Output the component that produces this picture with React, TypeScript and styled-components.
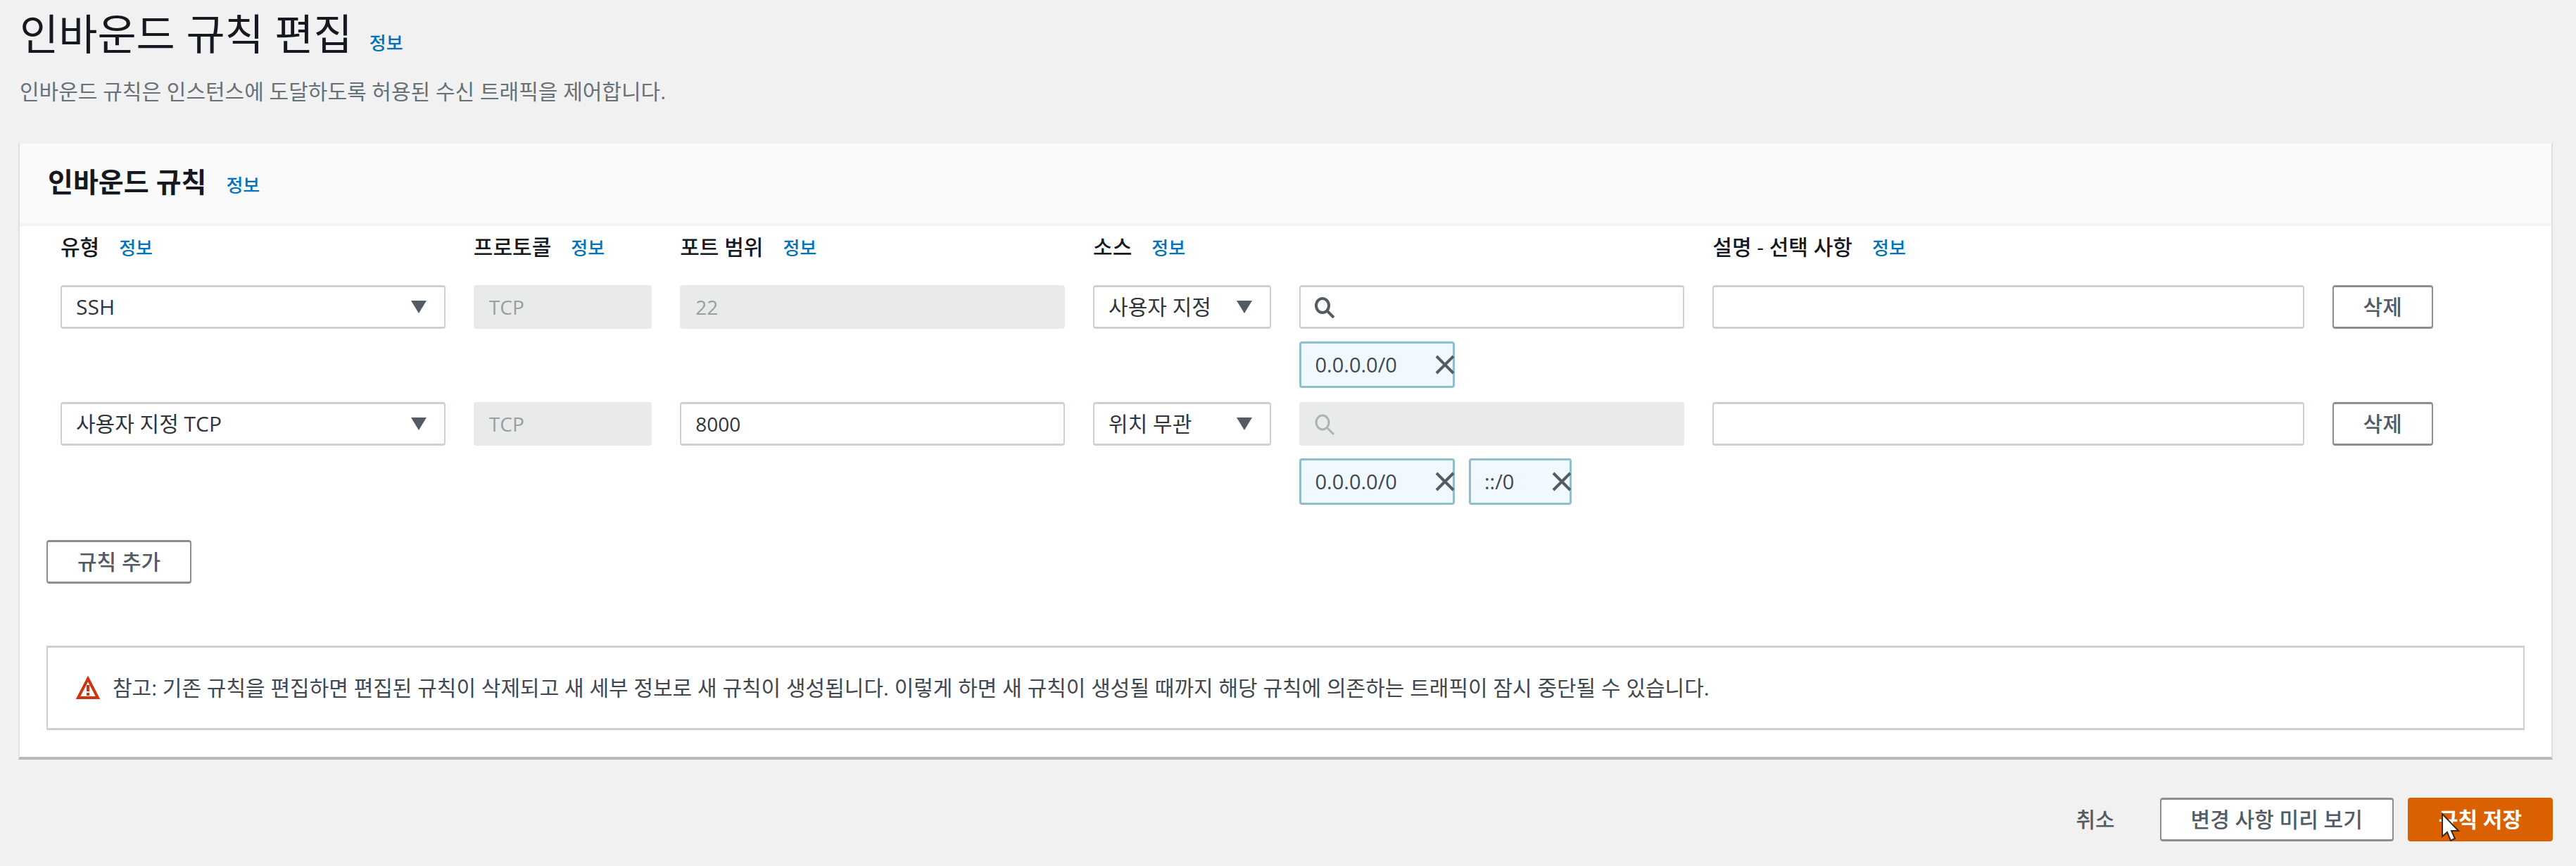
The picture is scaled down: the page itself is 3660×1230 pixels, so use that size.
import React, { useState } from "react";
import styled, { createGlobalStyle, css } from "styled-components";

const GlobalStyle = createGlobalStyle`
  *, *::before, *::after { box-sizing: border-box; }
  body {
    margin: 0;
    background: #f1f1f1;
    color: #16191f;
    font-family: "Open Sans", "Noto Sans CJK KR", sans-serif;
    font-size: 30px;
    line-height: 44px;
  }
  button, input, select { font: inherit; color: inherit; }
  a { color: #0073bb; text-decoration: none; }
`;

const Page = styled.main`
  padding: 12px 33px 36px 26px;
`;

const PageHeader = styled.header`
  display: flex;
  flex-direction: column;
  gap: 24px;
  margin-bottom: 50px;
  padding-left: 2px;
`;

const TitleRow = styled.div<{ $gap: number }>`
  display: flex;
  align-items: baseline;
  gap: ${(p) => p.$gap}px;
`;

const PageTitle = styled.h1`
  margin: 0;
  font-size: 60px;
  line-height: 72px;
  font-weight: 400;
`;

const PageDescription = styled.p`
  margin: 0;
  color: #687078;
`;

const InfoLink = styled.a`
  font-size: 26px;
  font-weight: 500;
`;

const Card = styled.section`
  background: #fff;
  border: 2px solid #dde2e2;
  border-top-color: #eef0f0;
  border-bottom: 4px solid #b5bbbd;
`;

const CardHeader = styled.div`
  padding: 26px 40px 31px;
  background: #fafafa;
  border-bottom: 4px solid #f3f3f3;
`;

const CardTitle = styled.h2`
  margin: 0;
  font-size: 39px;
  line-height: 56px;
  font-weight: 700;
`;

const CardBody = styled.div`
  padding: 8px 38px 38px;
`;

const RuleGrid = styled.div`
  display: grid;
  grid-template-columns: repeat(12, minmax(0, 1fr));
  row-gap: 20px;
`;

const Cell = styled.div<{ $span: number }>`
  grid-column: span ${(p) => p.$span};
  padding: 0 20px;
  min-width: 0;
`;

const HeadCell = styled(Cell)`
  display: flex;
  align-items: baseline;
  gap: 28px;
  padding-bottom: 11px;
  white-space: nowrap;
`;

const ColumnLabel = styled.span`
  font-weight: 500;
`;

const fieldBox = css`
  display: block;
  width: 100%;
  height: 62px;
  padding: 0 20px;
  border: 3px solid #ccd1d1;
  border-left-width: 2px;
  border-right-width: 2px;
  border-radius: 4px;
  background: #fff;
  color: #30353d;
  outline: none;

  &:disabled {
    background: #e9ebea;
    border-color: #e9ebea;
    color: #95a0a2;
    opacity: 1;
  }
`;

const TextField = styled.input<{ $icon?: boolean }>`
  ${fieldBox}
  padding-left: ${(p) => (p.$icon ? 66 : 20)}px;
  font-size: 28px;
`;

const SelectField = styled.select`
  ${fieldBox}
  appearance: none;
  padding-right: 48px;
`;

const FieldFrame = styled.div`
  position: relative;
`;

const ArrowIcon = styled.svg`
  position: absolute;
  right: 27px;
  top: 22px;
  width: 22px;
  height: 18px;
  fill: #545b64;
  pointer-events: none;
`;

const SearchIcon = styled.svg<{ $muted?: boolean }>`
  position: absolute;
  left: 21px;
  top: 16px;
  width: 31px;
  height: 31px;
  fill: none;
  stroke: ${(p) => (p.$muted ? "#aab3b4" : "#545b64")};
  stroke-width: ${(p) => (p.$muted ? 3 : 4)};
  pointer-events: none;
`;

const TagList = styled.div`
  display: flex;
  gap: 20px;
  margin-top: 18px;
`;

const Tag = styled.span`
  display: inline-flex;
  align-items: center;
  gap: 54px;
  height: 66px;
  padding-left: 19px;
  border: 3px solid #8fbfce;
  border-radius: 4px;
  background: #f0f9ff;
  color: #414750;
  font-size: 29px;
`;

const TagDismiss = styled.button`
  display: flex;
  margin: 0 -3px 0 0;
  padding: 0;
  border: 0;
  background: none;
  cursor: pointer;

  svg {
    width: 28px;
    height: 28px;
    stroke: #545b64;
    stroke-width: 4;
  }
`;

const Button = styled.button<{ $kind?: "primary" | "normal" | "link" }>`
  position: relative;
  height: 62px;
  padding: 0 42px;
  border: 3px solid #8b8f94;
  border-left-width: 2px;
  border-right-width: 2px;
  border-radius: 4px;
  background: #fff;
  color: #545b64;
  font-weight: 500;
  white-space: nowrap;
  cursor: pointer;

  ${(p) =>
    p.$kind === "primary" &&
    css`
      background: #db6000;
      border-color: #db6000;
      color: #fff;
      font-weight: 700;
    `}
  ${(p) =>
    p.$kind === "link" &&
    css`
      background: none;
      border-color: transparent;
    `}
`;

const AddRow = styled.div`
  margin: 50px 0 88px;
`;

const Notice = styled.div`
  display: flex;
  align-items: center;
  gap: 18px;
  min-height: 120px;
  padding: 16px 40px;
  border: 3px solid #ccd1d1;
  border-left-width: 2px;
  border-right-width: 2px;
  color: #414750;
`;

const WarningIcon = styled.svg`
  flex: none;
  width: 34px;
  height: 34px;
  fill: none;
  stroke: #d13212;
  stroke-width: 4;
`;

const Footer = styled.footer`
  display: flex;
  justify-content: flex-end;
  gap: 20px;
  margin-top: 54px;
`;

const Pointer = styled.svg`
  position: absolute;
  left: 44px;
  top: 18px;
  width: 30px;
  height: 42px;
  fill: #fff;
  stroke: #3a2a20;
  stroke-width: 2;
  pointer-events: none;
`;

interface Rule {
  type: string;
  port: string;
  portFixed: boolean;
  source: string;
  tags: string[];
}

const initialRules: Rule[] = [
  { type: "SSH", port: "22", portFixed: true, source: "사용자 지정", tags: ["0.0.0.0/0"] },
  { type: "사용자 지정 TCP", port: "8000", portFixed: false, source: "위치 무관", tags: ["0.0.0.0/0", "::/0"] },
];

const columns = [
  { id: "type", label: "유형", span: 2 },
  { id: "protocol", label: "프로토콜", span: 1 },
  { id: "port", label: "포트 범위", span: 2 },
  { id: "source", label: "소스", span: 3 },
  { id: "description", label: "설명 - 선택 사항", span: 4 },
];

function Info() {
  return <InfoLink href="#info">정보</InfoLink>;
}

function Select({ value, options, label, onChange }: {
  value: string;
  options: string[];
  label: string;
  onChange: (value: string) => void;
}) {
  return (
    <FieldFrame>
      <SelectField aria-labelledby={label} value={value} onChange={(e) => onChange(e.target.value)}>
        {options.map((o) => (
          <option key={o}>{o}</option>
        ))}
      </SelectField>
      <ArrowIcon viewBox="0 0 22 18" aria-hidden="true">
        <path d="M0 0H22L11 18Z" />
      </ArrowIcon>
    </FieldFrame>
  );
}

function RuleRow({ rule, onChange, onDelete }: {
  rule: Rule;
  onChange: (patch: Partial<Rule>) => void;
  onDelete: () => void;
}) {
  const anywhere = rule.source === "위치 무관";
  return (
    <>
      <Cell $span={2}>
        <Select
          label="col-type"
          value={rule.type}
          options={["SSH", "사용자 지정 TCP"]}
          onChange={(type) => onChange({ type })}
        />
      </Cell>
      <Cell $span={1}>
        <TextField aria-labelledby="col-protocol" value="TCP" disabled readOnly />
      </Cell>
      <Cell $span={2}>
        <TextField
          aria-labelledby="col-port"
          value={rule.port}
          disabled={rule.portFixed}
          onChange={(e) => onChange({ port: e.target.value })}
        />
      </Cell>
      <Cell $span={1}>
        <Select
          label="col-source"
          value={rule.source}
          options={["사용자 지정", "위치 무관"]}
          onChange={(source) => onChange({ source })}
        />
      </Cell>
      <Cell $span={2}>
        <FieldFrame>
          <TextField $icon type="text" aria-labelledby="col-source" disabled={anywhere} />
          <SearchIcon $muted={anywhere} viewBox="0 0 31 31" aria-hidden="true">
            <ellipse cx="12" cy="13" rx="9" ry="10" />
            <path d="M18 20L28 30" />
          </SearchIcon>
        </FieldFrame>
        <TagList>
          {rule.tags.map((tag) => (
            <Tag key={tag}>
              {tag}
              <TagDismiss
                type="button"
                aria-label="제거"
                onClick={() => onChange({ tags: rule.tags.filter((t) => t !== tag) })}
              >
                <svg viewBox="0 0 28 28" aria-hidden="true">
                  <path d="M2 2L26 26M26 2L2 26" />
                </svg>
              </TagDismiss>
            </Tag>
          ))}
        </TagList>
      </Cell>
      <Cell $span={3}>
        <TextField aria-labelledby="col-description" />
      </Cell>
      <Cell $span={1}>
        <Button type="button" onClick={onDelete}>삭제</Button>
      </Cell>
    </>
  );
}

export default function App() {
  const [rules, setRules] = useState(initialRules);

  const update = (index: number, patch: Partial<Rule>) =>
    setRules(rules.map((r, i) => (i === index ? { ...r, ...patch } : r)));

  const addRule = () =>
    setRules([...rules, { type: "사용자 지정 TCP", port: "", portFixed: false, source: "사용자 지정", tags: [] }]);

  return (
    <>
      <GlobalStyle />
      <Page>
        <PageHeader>
          <TitleRow $gap={24}>
            <PageTitle>인바운드 규칙 편집</PageTitle>
            <Info />
          </TitleRow>
          <PageDescription>
            인바운드 규칙은 인스턴스에 도달하도록 허용된 수신 트래픽을 제어합니다.
          </PageDescription>
        </PageHeader>

        <Card>
          <CardHeader>
            <TitleRow $gap={28}>
              <CardTitle>인바운드 규칙</CardTitle>
              <Info />
            </TitleRow>
          </CardHeader>
          <CardBody>
            <RuleGrid>
              {columns.map((c) => (
                <HeadCell key={c.id} $span={c.span}>
                  <ColumnLabel id={`col-${c.id}`}>{c.label}</ColumnLabel>
                  <Info />
                </HeadCell>
              ))}
              {rules.map((rule, i) => (
                <RuleRow
                  key={i}
                  rule={rule}
                  onChange={(patch) => update(i, patch)}
                  onDelete={() => setRules(rules.filter((_, j) => j !== i))}
                />
              ))}
            </RuleGrid>
            <AddRow>
              <Button type="button" onClick={addRule}>규칙 추가</Button>
            </AddRow>
            <Notice role="note">
              <WarningIcon viewBox="0 0 34 34" aria-hidden="true">
                <path d="M17 4L31 31H3Z" />
                <path d="M17 13V22M17 24V28" />
              </WarningIcon>
              <span>
                참고: 기존 규칙을 편집하면 편집된 규칙이 삭제되고 새 세부 정보로 새 규칙이 생성됩니다. 이렇게 하면 새 규칙이 생성될 때까지 해당 규칙에 의존하는 트래픽이 잠시 중단될 수 있습니다.
              </span>
            </Notice>
          </CardBody>
        </Card>

        <Footer>
          <Button type="button" $kind="link">취소</Button>
          <Button type="button">변경 사항 미리 보기</Button>
          <Button type="submit" $kind="primary">
            규칙 저장
            <Pointer viewBox="0 0 30 42" aria-hidden="true">
              <path d="M3 2V34L10 28L15 40L21 37L16 26H26Z" />
            </Pointer>
          </Button>
        </Footer>
      </Page>
    </>
  );
}
